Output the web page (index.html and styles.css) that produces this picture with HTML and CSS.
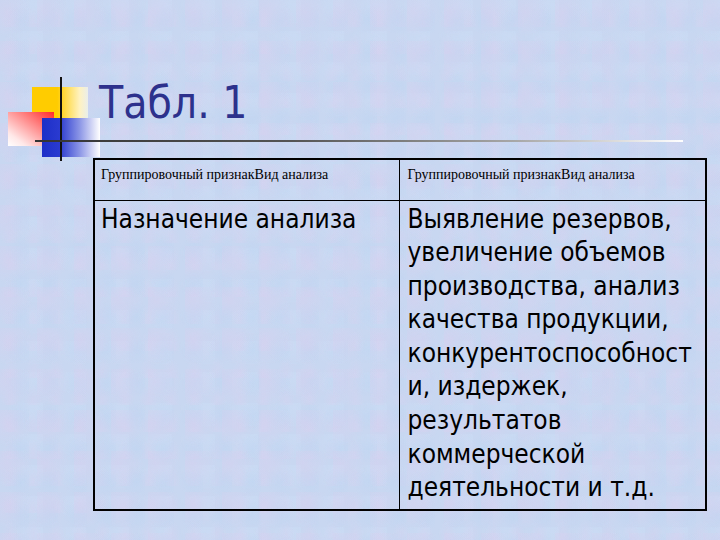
FILE: index.html
```html
<!DOCTYPE html>
<html lang="ru">
<head>
<meta charset="utf-8">
<title>Табл. 1</title>
<link rel="stylesheet" href="styles.css">
</head>
<body>
<div class="slide">
  <header class="head">
    <div class="deco">
      <div class="sq yellow"></div>
      <div class="sq red"></div>
      <div class="sq blue"></div>
      <div class="vline"></div>
    </div>
    <h1 class="title">Табл. 1</h1>
    <div class="hline"></div>
  </header>
  <table class="grid">
    <colgroup><col class="k1"><col class="k2"></colgroup>
    <tr class="hrow">
      <td class="c1">Группировочный признакВид анализа</td>
      <td class="c2">Группировочный признакВид анализа</td>
    </tr>
    <tr class="brow">
      <td class="c1">Назначение анализа</td>
      <td class="c2">Выявление резервов,<br>увеличение объемов<br>производства, анализ<br>качества продукции,<br>конкурентоспособност<br>и, издержек,<br>результатов<br>коммерческой<br>деятельности и т.д.</td>
    </tr>
  </table>
</div>
</body>
</html>
```
FILE: styles.css
```css
html, body {
  margin: 0;
  padding: 0;
}
body {
  width: 720px;
  height: 540px;
  overflow: hidden;
  background-color: #c8d7f1;
  background-image:
    radial-gradient(ellipse at 20% 30%, rgba(222,205,238,0.35) 0, transparent 60%),
    radial-gradient(ellipse at 70% 60%, rgba(185,212,242,0.35) 0, transparent 55%),
    radial-gradient(ellipse at 45% 85%, rgba(220,208,240,0.3) 0, transparent 50%),
    radial-gradient(ellipse at 85% 15%, rgba(205,225,248,0.35) 0, transparent 55%);
  background-size: 37px 41px, 29px 33px, 23px 27px, 43px 31px;
  font-family: "DejaVu Sans", sans-serif;
}
.slide {
  width: 720px;
  height: 540px;
}
.head {
  position: relative;
  height: 158px;
}
.deco {
  position: absolute;
  left: 0;
  top: 0;
  width: 110px;
  height: 165px;
}
.sq {
  position: absolute;
}
.yellow {
  left: 32px;
  top: 87px;
  width: 56px;
  height: 34px;
  background: linear-gradient(to right, #ffcc00 0%, #ffcc00 45%, #fff2c0 85%, rgba(255,255,230,0.6) 100%);
}
.red {
  left: 8px;
  top: 112px;
  width: 46px;
  height: 34px;
  background: linear-gradient(to bottom left, #ff2a2a 0%, #ff8a8a 40%, #ffe8e8 80%, #fff 100%);
}
.blue {
  left: 42px;
  top: 118px;
  width: 58px;
  height: 39px;
  background: linear-gradient(to right, #1d2fc8 0%, #2a3ad0 30%, #8c96e6 65%, #ffffff 100%);
}
.vline {
  position: absolute;
  left: 60px;
  top: 77px;
  width: 2px;
  height: 84px;
  background: #111;
}
.title {
  position: absolute;
  left: 99px;
  top: 78px;
  margin: 0;
  font-family: "DejaVu Sans Condensed", "DejaVu Sans", sans-serif;
  font-weight: normal;
  font-size: 44px;
  line-height: 50px;
  color: #2d318c;
}
.hline {
  position: absolute;
  left: 35px;
  top: 140px;
  width: 648px;
  height: 2px;
  background: linear-gradient(to right, #333 0%, #555 40%, #aaa 75%, #fff 100%);
}
.grid {
  margin-left: 93px;
  border-collapse: collapse;
  border: 2px solid #000;
  width: 612px;
  table-layout: fixed;
}
.k1 { width: 305px; }
.k2 { width: 307px; }
.grid td {
  border: 1px solid #000;
  vertical-align: top;
  padding: 0;
  white-space: nowrap;
  overflow: hidden;
}
.grid .c1 {
  padding-left: 6px;
}
.grid .c2 {
  padding-left: 8px;
}
.hrow td {
  height: 41px;
  font-family: "Liberation Serif", serif;
  font-size: 14px;
  line-height: 16px;
  padding-top: 7px;
  box-sizing: border-box;
}
.brow td {
  height: 306px;
  font-family: "DejaVu Sans Condensed", "DejaVu Sans", sans-serif;
  font-size: 26px;
  line-height: 33.6px;
  padding-top: 2px;
  color: #000;
}
```
